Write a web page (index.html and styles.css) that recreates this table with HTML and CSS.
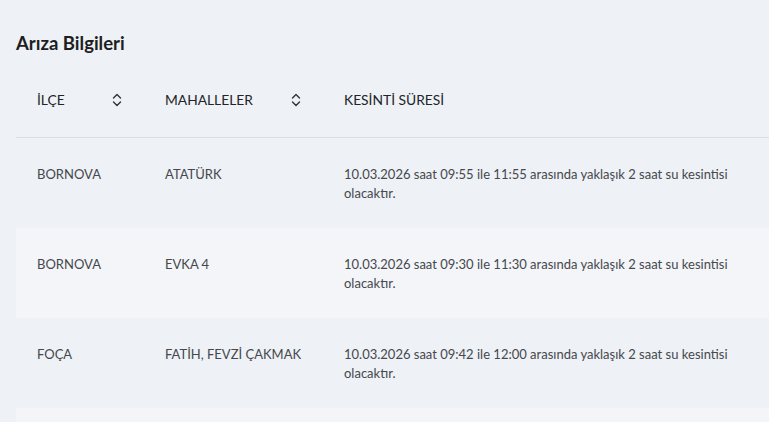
FILE: index.html
```html
<!DOCTYPE html>
<html lang="tr">
<head>
<meta charset="utf-8">
<title>Arıza Bilgileri</title>
<link rel="stylesheet" href="styles.css">
</head>
<body>
<section class="panel">
  <h2 class="title">Arıza Bilgileri</h2>
  <div class="table">
    <div class="row head">
      <div class="cell sortable">İLÇE
        <svg class="sort" viewBox="0 0 10 14" width="10" height="14"><path d="M1.5 5 L5 1.5 L8.5 5 M1.5 9 L5 12.5 L8.5 9" fill="none" stroke="#333" stroke-width="1.4" stroke-linecap="round" stroke-linejoin="round"/></svg>
      </div>
      <div class="cell sortable">MAHALLELER
        <svg class="sort" viewBox="0 0 10 14" width="10" height="14"><path d="M1.5 5 L5 1.5 L8.5 5 M1.5 9 L5 12.5 L8.5 9" fill="none" stroke="#333" stroke-width="1.4" stroke-linecap="round" stroke-linejoin="round"/></svg>
      </div>
      <div class="cell">KESİNTİ SÜRESİ</div>
    </div>
    <div class="row">
      <div class="cell name">BORNOVA</div>
      <div class="cell name">ATATÜRK</div>
      <div class="cell desc">10.03.2026 saat 09:55 ile 11:55 arasında yaklaşık 2 saat su kesintisi olacaktır.</div>
    </div>
    <div class="row alt">
      <div class="cell name">BORNOVA</div>
      <div class="cell name">EVKA 4</div>
      <div class="cell desc">10.03.2026 saat 09:30 ile 11:30 arasında yaklaşık 2 saat su kesintisi olacaktır.</div>
    </div>
    <div class="row">
      <div class="cell name">FOÇA</div>
      <div class="cell name">FATİH, FEVZİ ÇAKMAK</div>
      <div class="cell desc">10.03.2026 saat 09:42 ile 12:00 arasında yaklaşık 2 saat su kesintisi olacaktır.</div>
    </div>
    <div class="row alt"></div>
  </div>
</section>
</body>
</html>
```

FILE: styles.css
```css
html, body {
  margin: 0;
  padding: 0;
  background: #eef1f5;
  font-family: Lato, "Noto Sans", "Liberation Sans", sans-serif;
  color: #45484d;
  overflow: hidden;
}

.panel {
  padding: 31px 0 0 16px;
}

.title {
  margin: 0;
  font-size: 18.5px;
  line-height: 24px;
  font-weight: 700;
  color: #1c1e22;
}

.table {
  width: 800px;
}

.row {
  display: grid;
  grid-template-columns: 128px 179px 1fr;
  padding: 27px 0 25px;
  min-height: 38px;
}

.row.alt {
  background: #f3f5f8;
}

.row.head {
  padding: 36px 0 28px;
  min-height: 0;
  border-bottom: 1px solid #dadee4;
  color: #222428;
}

.cell {
  padding: 0 22px 0 21px;
  font-size: 13px;
  line-height: 19px;
}

.cell.name {
  white-space: nowrap;
}

.row.head .cell {
  font-size: 13.8px;
  line-height: 18px;
  font-weight: 400;
}

.sortable {
  display: flex;
  align-items: center;
  justify-content: space-between;
}

.sort {
  display: block;
}

.desc {
  max-width: 400px;
}
```
